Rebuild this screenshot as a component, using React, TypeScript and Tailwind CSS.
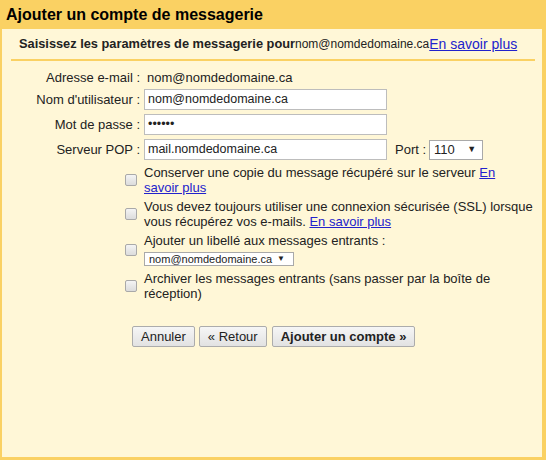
import React from 'react';

const Box: React.FC = () => (
  <span className="block w-[12px] h-[12px] shrink-0 rounded-[2px] border border-[#a9a9a9] bg-gradient-to-b from-[#f4f4f4] to-[#dcdcdc]" />
);

const Link: React.FC<{ children: React.ReactNode }> = ({ children }) => (
  <a href="#" className="text-[#2222cc] underline">
    {children}
  </a>
);

const TextInput: React.FC<{ value: string }> = ({ value }) => (
  <div className="w-[243px] h-[21px] border border-[#bdbdbd] bg-white px-[3px] flex items-center text-[12.5px] text-[#222]">
    {value}
  </div>
);

const Btn: React.FC<{ children: React.ReactNode; bold?: boolean }> = ({ children, bold }) => (
  <button
    className={`h-[21px] px-[8px] border border-[#acacac] rounded-[2px] bg-gradient-to-b from-[#f6f6f6] to-[#e2e2e2] text-[13px] text-[#222] leading-none ${
      bold ? 'font-bold ml-[1px]' : ''
    }`}
  >
    {children}
  </button>
);

export default function App() {
  return (
    <div className="w-[546px] h-[460px] bg-[#fad163] flex flex-col font-['Liberation_Sans',Arial,sans-serif] text-[#222]">
      <div className="h-[29px] px-[6px] flex items-center text-[16px] font-bold text-black">
        Ajouter un compte de messagerie
      </div>

      <div className="flex-1 ml-[2px] mr-[4px] mb-[3px] bg-[#fff7d7] flex flex-col">
        <div className="h-[30px] pl-[17px] flex items-center text-[13px] whitespace-nowrap">
          <span className="font-bold text-[12.8px]">Saisissez les paramètres de messagerie pour</span>
          <span className="text-[12px]">nom@nomdedomaine.ca</span>
          <span className="text-[14px]">
            <Link>En savoir plus</Link>
          </span>
        </div>
        <div className="ml-[9px] w-[524px] h-[2px] bg-[#fad163]" />

        <div className="mt-[6px] flex flex-col text-[13px]">
          <div className="h-[22px] flex items-center">
            <span className="w-[138px] text-right">Adresse e-mail :</span>
            <span className="ml-[7px]">nom@nomdedomaine.ca</span>
          </div>
          <div className="flex items-center">
            <span className="w-[138px] text-right">Nom d'utilisateur :</span>
            <span className="ml-[4px]">
              <TextInput value="nom@nomdedomaine.ca" />
            </span>
          </div>
          <div className="mt-[4px] flex items-center">
            <span className="w-[138px] text-right">Mot de passe :</span>
            <span className="ml-[4px]">
              <TextInput value="••••••" />
            </span>
          </div>
          <div className="mt-[4px] flex items-center">
            <span className="w-[138px] text-right">Serveur POP :</span>
            <span className="ml-[4px]">
              <TextInput value="mail.nomdedomaine.ca" />
            </span>
            <span className="ml-[8px]">Port :</span>
            <div className="ml-[3px] w-[54px] h-[20px] border border-[#a9a9a9] bg-white flex items-center justify-between px-[4px]">
              <span>110</span>
              <span className="text-[9px] pr-[2px]">▼</span>
            </div>
          </div>
        </div>

        <div className="mt-[5px] ml-[123px] flex flex-col gap-[4px] text-[13px] leading-[15px] whitespace-nowrap">
          <div className="flex items-center gap-[7px]">
            <Box />
            <p>
              Conserver une copie du message récupéré sur le serveur <Link>En</Link>
              <br />
              <Link>savoir plus</Link>
            </p>
          </div>
          <div className="flex items-center gap-[7px]">
            <Box />
            <p>
              Vous devez toujours utiliser une connexion sécurisée (SSL) lorsque
              <br />
              vous récupérez vos e-mails. <Link>En savoir plus</Link>
            </p>
          </div>
          <div className="flex items-center gap-[7px]">
            <Box />
            <div>
              <p>Ajouter un libellé aux messages entrants :</p>
              <div className="mt-[4px] mb-[1px] w-[150px] h-[14px] border border-[#a9a9a9] bg-white flex items-center justify-between pl-[4px] pr-[8px] text-[11px] leading-none">
                <span>nom@nomdedomaine.ca</span>
                <span className="text-[8px]">▼</span>
              </div>
            </div>
          </div>
          <div className="flex items-center gap-[7px]">
            <Box />
            <p>
              Archiver les messages entrants (sans passer par la boîte de
              <br />
              réception)
            </p>
          </div>
        </div>

        <div className="mt-[25px] ml-[130px] flex items-start gap-[4px]">
          <Btn>Annuler</Btn>
          <Btn>« Retour</Btn>
          <Btn bold>Ajouter un compte »</Btn>
        </div>
      </div>
    </div>
  );
}
